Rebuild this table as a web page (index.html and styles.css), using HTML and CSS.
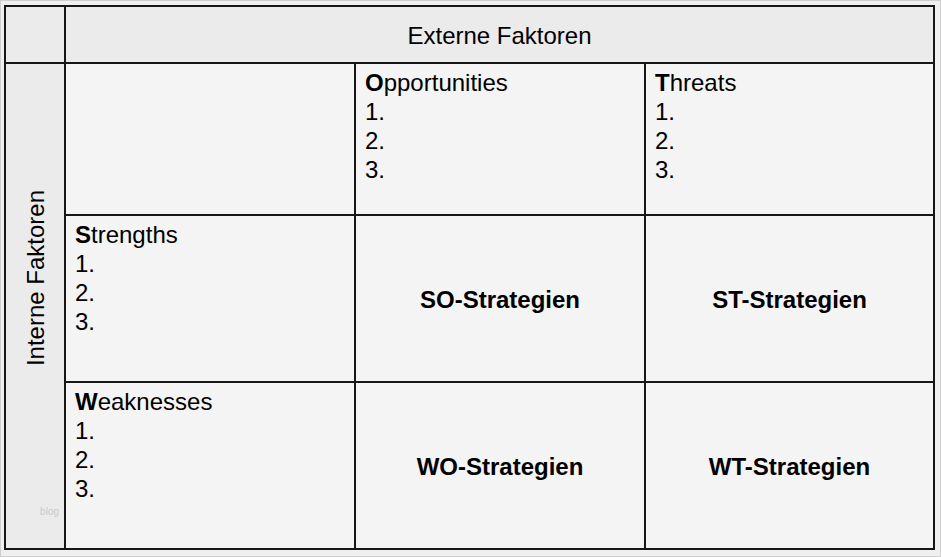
FILE: index.html
```html
<!DOCTYPE html>
<html lang="de">
<head>
<meta charset="utf-8">
<title>SWOT-Matrix</title>
<link rel="stylesheet" href="styles.css">
</head>
<body>
<div class="frame">
  <div class="matrix">
    <div class="cell corner"></div>
    <div class="cell head">Externe Faktoren</div>

    <div class="cell side">
      <span class="side-label">Interne Faktoren</span>
      <span class="watermark">blog</span>
    </div>
    <div class="cell blank"></div>
    <div class="cell list">
      <div class="title"><b>O</b>pportunities</div>
      <div>1.</div><div>2.</div><div>3.</div>
    </div>
    <div class="cell list">
      <div class="title"><b>T</b>hreats</div>
      <div>1.</div><div>2.</div><div>3.</div>
    </div>

    <div class="cell list">
      <div class="title"><b>S</b>trengths</div>
      <div>1.</div><div>2.</div><div>3.</div>
    </div>
    <div class="cell strat">SO-Strategien</div>
    <div class="cell strat">ST-Strategien</div>

    <div class="cell list">
      <div class="title"><b>W</b>eaknesses</div>
      <div>1.</div><div>2.</div><div>3.</div>
    </div>
    <div class="cell strat">WO-Strategien</div>
    <div class="cell strat">WT-Strategien</div>
  </div>
</div>
</body>
</html>
```

FILE: styles.css
```css
html, body {
  margin: 0;
  padding: 0;
}
body {
  background: #ededed;
  font-family: "Liberation Sans", Arial, sans-serif;
  color: #000;
}
.frame {
  width: 941px;
  height: 557px;
  box-sizing: border-box;
  border: 1px solid #cfcfcf;
  padding: 4px 0 0 3px;
  background: #efefef;
}
.matrix {
  display: grid;
  grid-template-columns: 58px 288px 288px 287px;
  grid-template-rows: 55px 150px 165px 165px;
  gap: 2px;
  padding: 2px;
  background: #161616;
  width: fit-content;
}
.cell {
  background: #f4f4f4;
  font-size: 24px;
  line-height: 29px;
  position: relative;
}
.corner {
  background: #ebebeb;
}
.head {
  grid-column: 2 / 5;
  background: #ebebeb;
  display: flex;
  align-items: center;
  justify-content: center;
  padding-top: 1px;
}
.side {
  grid-row: 2 / 5;
  background: #ebebeb;
  display: flex;
  align-items: center;
  justify-content: center;
  padding-bottom: 56px;
  box-sizing: border-box;
}
.side-label {
  writing-mode: vertical-rl;
  transform: rotate(180deg);
  white-space: nowrap;
}
.watermark {
  position: absolute;
  right: 5px;
  bottom: 30px;
  font-size: 10px;
  line-height: 12px;
  color: #c9c9c9;
}
.list {
  padding: 4px 10px 0 9px;
}
.title b {
  font-weight: bold;
}
.strat {
  display: flex;
  align-items: center;
  justify-content: center;
  font-weight: bold;
  padding-top: 2px;
}
```
